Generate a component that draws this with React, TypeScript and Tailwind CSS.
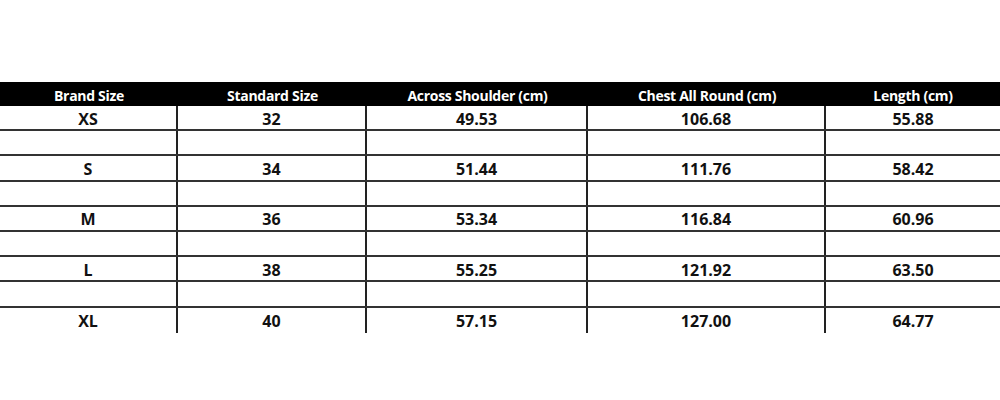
const headers = ["Brand Size", "Standard Size", "Across Shoulder (cm)", "Chest All Round (cm)", "Length (cm)"];

const sizes = [
  ["XS", "32", "49.53", "106.68", "55.88"],
  ["S", "34", "51.44", "111.76", "58.42"],
  ["M", "36", "53.34", "116.84", "60.96"],
  ["L", "38", "55.25", "121.92", "63.50"],
  ["XL", "40", "57.15", "127.00", "64.77"],
];

const widths = ["w-[178px]", "w-[189px]", "w-[221px]", "w-[238px]", "flex-1"];

const rows: (string[] | null)[] = [];
sizes.forEach((s, i) => {
  rows.push(s);
  if (i < sizes.length - 1) rows.push(null);
});

export default function App() {
  return (
    <div className="w-[1000px] h-[400px] bg-white pt-[82px] font-['Open_Sans','Liberation_Sans',sans-serif] font-bold text-[#111]">
      <div className="flex h-[24px] bg-black text-white text-[14px] tracking-[-0.3px] leading-none">
        {headers.map((h, i) => (
          <div key={h} className={`${widths[i]} flex items-end justify-center pb-[3px]`}>
            {h}
          </div>
        ))}
      </div>
      {rows.map((r, ri) => (
        <div
          key={ri}
          className={`flex h-[25.2px] text-[16px] leading-none ${ri < rows.length - 1 ? "border-b-2 border-[#333]" : ""}`}
        >
          {widths.map((w, ci) => (
            <div
              key={ci}
              className={`${w} flex items-center justify-center pt-[2px] ${ci < widths.length - 1 ? "border-r-2 border-[#222]" : ""}`}
            >
              {r ? r[ci] : ""}
            </div>
          ))}
        </div>
      ))}
    </div>
  );
}
